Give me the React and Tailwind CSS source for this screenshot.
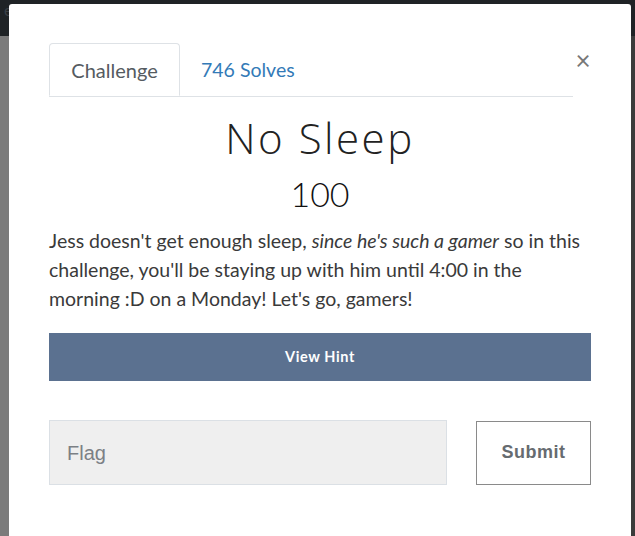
import React from 'react';

const App = () => {
  return (
    <div className="relative h-[536px] w-[635px] overflow-hidden bg-[#7b7b7b]" style={{ fontFamily: 'Lato, sans-serif' }}>
      <div className="h-[36px] bg-[#1f2326] px-1 pt-[2px] text-[16px] leading-[16px] text-[#3a4046]">enges</div>
      <div className="absolute right-0 top-[36px] h-[500px] w-[4px] bg-[#3b3b3b]" />
      <div className="absolute left-[9px] top-[4px] h-[540px] w-[622px] rounded-[3px] bg-white px-[40px] pt-[39px]">
        <div className="flex items-start">
          <div className="flex flex-1 border-b border-[#dee2e6]">
            <div className="-mb-px flex h-[53px] w-[131px] items-center justify-center rounded-t-[4px] border border-b-white border-[#dee2e6] bg-white text-[20px] text-[#555b61]">
              Challenge
            </div>
            <div className="flex h-[53px] items-center px-[21px] text-[19.5px] text-[#337ab7]">746 Solves</div>
          </div>
          <button className="ml-[2px] mt-[4px] w-[16px] text-[26px] leading-[26px] text-[#777]">×</button>
        </div>
        <h2 className="mt-[17px] text-center text-[42px] font-light leading-[48px] tracking-[2.5px] text-[#222]" style={{ fontFamily: '"Open Sans", sans-serif' }}>
          No Sleep
        </h2>
        <div className="mt-[12px] text-center text-[34px] font-light leading-[40px] text-[#111]">100</div>
        <p className="mt-[12px] text-[19.5px] leading-[29px] text-[#3a3a3a]">
          Jess doesn't get enough sleep, <em>since he's such a gamer</em> so in this challenge, you'll be staying up with him until 4:00 in the morning :D on a Monday! Let's go, gamers!
        </p>
        <button className="mt-[20px] flex h-[48px] w-full items-center justify-center bg-[#5b7190] text-[14.5px] font-bold tracking-[0.6px] text-white">
          View Hint
        </button>
        <div className="mt-[39px] flex items-center">
          <div className="flex h-[65px] w-[398px] items-center border border-[#dbe0e5] bg-[#efefef] px-[17px] text-[20px] text-[#7c8085]" style={{ fontFamily: '"Liberation Sans", sans-serif' }}>
            Flag
          </div>
          <button className="ml-auto h-[64px] w-[115px] border border-[#8a8a8a] bg-white text-[18px] font-bold tracking-[0.5px] text-[#666b70]" style={{ fontFamily: '"Liberation Sans", sans-serif' }}>
            Submit
          </button>
        </div>
      </div>
    </div>
  );
};

export default App;
